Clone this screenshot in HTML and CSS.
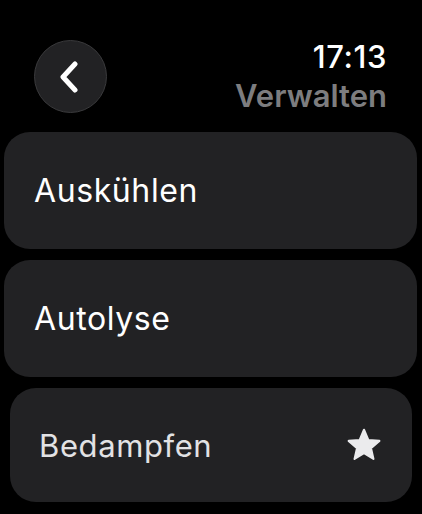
FILE: index.html
```html
<!DOCTYPE html>
<html lang="de">
<head>
    <meta charset="UTF-8">
    <meta name="viewport" content="width=device-width, initial-scale=1.0">
    <title>Verwalten</title>
    <link rel="stylesheet" href="styles.css">
</head>
<body>
    <header class="top">
        <button class="back" aria-label="Zurück">
            <svg width="20" height="32" viewBox="0 0 20 32">
                <path d="M16 3 L4 16 L16 29" fill="none" stroke="#fff" stroke-width="5" stroke-linecap="round" stroke-linejoin="round"/>
            </svg>
        </button>
        <div class="title">
            <div class="time">17:13</div>
            <div class="heading">Verwalten</div>
        </div>
    </header>
    <main class="list">
        <div class="row">Auskühlen</div>
        <div class="row">Autolyse</div>
        <div class="row row-small">
            <span>Bedampfen</span>
            <svg class="star" width="36" height="34" viewBox="0 0 24 23">
                <path d="M12 1.2 L14.9 8.1 L22.4 8.7 L16.7 13.6 L18.4 20.9 L12 17 L5.6 20.9 L7.3 13.6 L1.6 8.7 L9.1 8.1 Z" fill="#ebebed" stroke="#ebebed" stroke-width="1.4" stroke-linejoin="round"/>
            </svg>
        </div>
    </main>
</body>
</html>
```

FILE: styles.css
```css
body {
    margin: 0;
    background-color: #000;
    color: #fff;
    font-family: Inter, "Noto Sans", sans-serif;
    width: 422px;
    height: 514px;
    overflow: hidden;
}
.top {
    display: flex;
    justify-content: space-between;
    align-items: flex-start;
    padding: 37px 35px 0 34px;
    height: 95px;
}
.back {
    width: 73px;
    height: 73px;
    margin-top: 3px;
    border-radius: 50%;
    background-color: #222224;
    border: 1.5px solid #3a3a3c;
    display: flex;
    align-items: center;
    justify-content: center;
    padding: 0 4px 0 0;
}
.title {
    text-align: right;
    font-weight: 600;
    font-size: 31px;
    line-height: 39px;
}
.time {
    font-weight: 500;
    letter-spacing: 0.6px;
}
.heading {
    color: #7d7d7f;
}
.list {
    display: flex;
    flex-direction: column;
    gap: 11px;
    padding: 0 5px 0 4px;
}
.row {
    height: 117px;
    border-radius: 26px;
    background-color: #222224;
    display: flex;
    align-items: center;
    padding-left: 30px;
    font-size: 32px;
    letter-spacing: 0.6px;
}
.row-small {
    height: 114px;
    margin: 0 5px 0 6px;
    padding: 0 30px 0 29px;
    justify-content: space-between;
    color: #e2e2e4;
    font-size: 31px;
}
.star {
    display: block;
}
```
